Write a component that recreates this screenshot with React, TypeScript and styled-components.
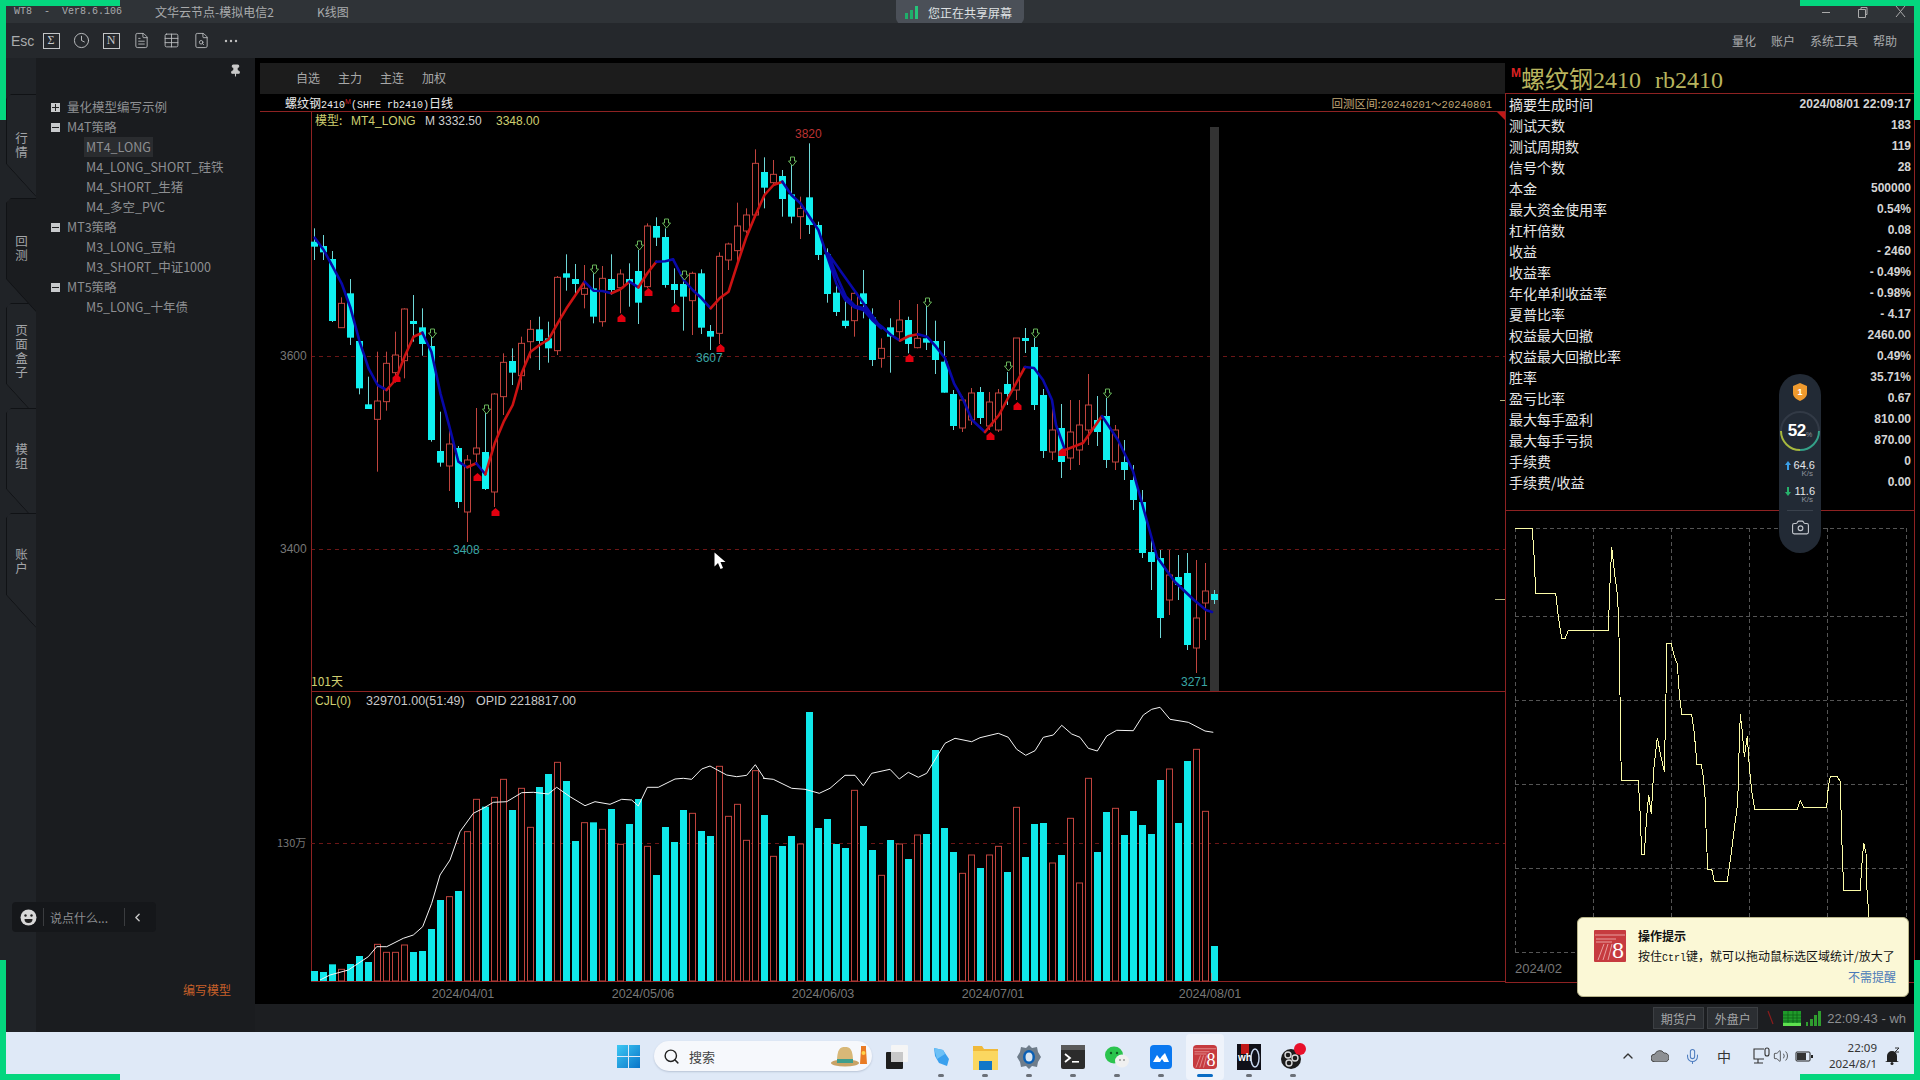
import React from "react";
import styled, { createGlobalStyle } from "styled-components";
import {
  Clock, FileText, Table, FileSearch, Search, ChevronUp, ChevronLeft, Mic, Volume2, Camera, Pin,
} from "lucide-react";

const CJK = `"Noto Sans CJK SC", "Liberation Sans", sans-serif`;
const SANS = `"Liberation Sans", "Noto Sans CJK SC", sans-serif`;
const MONO = `"Liberation Mono", "Noto Sans CJK SC", monospace`;

const Global = createGlobalStyle`
  html, body { margin: 0; padding: 0; width: 1920px; height: 1080px; overflow: hidden; background: #000; }
  body { font-family: ${CJK}; }
  * { box-sizing: border-box; }
`;

/* ---------- data ---------- */
type Candle = ["c" | "r", number, number, number, number];
const z2 = (t: "c" | "r", a: number, b: number, c: number, d: number): Candle => [t, 60 + a / 3, 60 + b / 3, 60 + c / 3, 60 + d / 3];
const z3 = (t: "c" | "r", a: number, b: number, c: number, d: number): Candle => [t, 100 + a / 3, 100 + b / 3, 100 + c / 3, 100 + d / 3];
const candles: Candle[] = [
  z2("c", 505, 545, 560, 600), z2("c", 525, 558, 577, 600), z2("c", 573, 597, 783, 786), z2("r", 712, 730, 803, 803),
  z2("c", 657, 700, 833, 855), z2("c", 840, 843, 985, 1003), z2("c", 950, 1033, 1047, 1047), z2("r", 875, 1023, 1078, 1235),
  z2("r", 875, 910, 1025, 1052), z2("r", 815, 885, 938, 968), z2("r", 745, 747, 902, 955), z2("c", 705, 783, 792, 845),
  z2("c", 745, 802, 852, 887), z2("c", 830, 858, 1140, 1145), z2("c", 1055, 1173, 1208, 1220),
  ["r", 427, 444, 466, 491], ["c", 446, 448, 502, 508], ["r", 455, 460, 512, 542], ["r", 408, 448, 454, 465],
  ["c", 413, 452, 489, 490], ["r", 393, 394, 492, 507],
  z2("r", 880, 907, 1010, 1065), z2("c", 865, 903, 938, 975), z2("r", 830, 850, 947, 990), z2("r", 780, 808, 845, 895),
  z2("c", 770, 808, 843, 930), z2("c", 785, 835, 865, 908), z2("r", 648, 652, 872, 885), z2("c", 583, 640, 653, 692),
  z2("c", 612, 657, 672, 705), z2("r", 615, 685, 703, 745), z2("c", 640, 685, 770, 790), z2("r", 618, 655, 785, 800),
  z2("c", 583, 657, 690, 705), z2("r", 628, 642, 683, 760), z2("c", 610, 657, 670, 740), z2("c", 570, 633, 728, 792),
  z2("r", 490, 498, 680, 685), z2("c", 472, 498, 533, 558), z2("c", 505, 531, 675, 683), z2("c", 625, 672, 690, 730),
  z2("c", 660, 672, 710, 812), z2("r", 635, 640, 722, 825), z2("c", 628, 640, 803, 822), z2("c", 795, 813, 830, 870),
  z2("r", 577, 589, 820, 852), z2("r", 548, 552, 600, 630), z2("r", 428, 498, 572, 610), z2("r", 445, 465, 513, 520),
  z2("r", 268, 310, 465, 470), z2("c", 292, 336, 383, 445), z2("r", 300, 343, 368, 375), z2("c", 330, 348, 417, 470),
  z2("c", 315, 403, 470, 490), z2("r", 410, 445, 470, 537),
  z3("c", 130, 292, 375, 402), z3("c", 365, 375, 465, 480), z3("c", 445, 463, 582, 608), z3("c", 550, 578, 636, 648),
  z3("c", 595, 662, 678, 685), z3("r", 572, 580, 662, 710), z3("c", 510, 580, 612, 655), z3("c", 625, 652, 780, 798),
  z3("r", 715, 745, 775, 803), z3("c", 655, 682, 710, 818), z3("r", 600, 660, 695, 720), z3("c", 650, 660, 732, 760),
  z3("r", 612, 715, 743, 745), z3("c", 618, 715, 728, 750), z3("c", 662, 723, 780, 822), z3("c", 723, 785, 878, 878),
  ["c", 390, 394, 426, 430], ["r", 396, 400, 428, 432], ["r", 388, 393, 420, 425], ["c", 387, 392, 418, 424],
  ["r", 392, 402, 426, 430], ["r", 389, 393, 430, 432], ["c", 372, 384, 394, 405], ["r", 338, 338, 390, 400],
  ["c", 328, 338, 341, 353], ["c", 338, 347, 405, 410], ["c", 389, 395, 451, 458], ["r", 400, 430, 452, 460],
  ["c", 404, 428, 462, 478], ["r", 400, 432, 458, 470], ["r", 400, 425, 450, 465], ["r", 374, 405, 430, 445],
  ["c", 396, 420, 432, 446], ["c", 398, 416, 460, 468], ["r", 425, 430, 462, 470], ["c", 440, 462, 470, 480],
  ["c", 465, 480, 500, 510], ["c", 490, 502, 553, 558], ["c", 540, 552, 562, 590], ["c", 550, 558, 618, 638],
  ["r", 550, 575, 600, 615], ["c", 555, 577, 585, 600], ["c", 553, 573, 645, 650], ["r", 560, 618, 648, 673],
  ["r", 563, 591, 603, 640], ["c", 590, 594, 600, 604],
];
const greenMarks: [number, number][] = [
  [13, 333], [19, 409], [31, 269], [36, 245], [39, 223], [41, 275], [53, 161], [68, 302], [77, 366], [80, 333], [88, 393],
];
const redMarks: [number, number][] = [
  [9, 378], [18, 477], [20, 512], [34, 318], [37, 292], [40, 308], [45, 348], [66, 358], [75, 436], [78, 406], [83, 452],
];

type P = [number, number];
const p2 = (a: number[][]): P[] => a.map(([x, y]) => [260 + x / 2.45, 60 + y / 3] as P);
const p3 = (a: number[][]): P[] => a.map(([x, y]) => [800 + x / 3, 100 + y / 3] as P);
const maLines: { color: string; pts: P[] }[] = [
  { color: "#0808a8", pts: p2([[134, 533], [156, 570], [178, 620], [200, 670], [222, 745], [244, 845], [266, 925], [288, 975], [310, 990]]) },
  { color: "#cc1212", pts: p2([[310, 990], [332, 960], [354, 890], [376, 830], [398, 818]]) },
  { color: "#0808a8", pts: p2([[398, 818], [420, 875], [442, 1000], [464, 1100], [486, 1205], [508, 1222]]) },
  { color: "#cc1212", pts: p2([[508, 1222], [530, 1210]]) },
  { color: "#0808a8", pts: p2([[530, 1210], [552, 1243]]) },
  { color: "#cc1212", pts: p2([[552, 1243], [575, 1150], [597, 1085], [619, 1035], [641, 940], [663, 875], [685, 855], [707, 838], [729, 790], [751, 745], [773, 705], [795, 665]]) },
  { color: "#0808a8", pts: p2([[795, 665], [817, 692], [839, 693], [861, 700]]) },
  { color: "#cc1212", pts: p2([[861, 700], [883, 688], [905, 665]]) },
  { color: "#0808a8", pts: p2([[905, 665], [927, 682]]) },
  { color: "#cc1212", pts: p2([[927, 682], [949, 640], [971, 605]]) },
  { color: "#0808a8", pts: p2([[971, 605], [993, 604], [1012, 598]]) },
  { color: "#0808a8", pts: p2([[1012, 598], [1038, 660], [1060, 690], [1082, 715], [1104, 745]]) },
  { color: "#cc1212", pts: p2([[1104, 745], [1126, 715], [1148, 695], [1170, 610], [1192, 530], [1214, 465], [1236, 405], [1258, 375], [1280, 365]]) },
  { color: "#0808a8", pts: p2([[1280, 365], [1302, 405], [1324, 430], [1346, 470], [1368, 510], [1390, 590], [1412, 670], [1434, 720], [1456, 742], [1478, 750], [1500, 780], [1522, 805]]).concat(p3([[84, 460], [111, 530], [138, 590], [165, 618], [192, 625], [219, 660], [246, 680], [273, 705], [300, 722]])) },
  { color: "#cc1212", pts: p3([[300, 722], [327, 708], [354, 703]]) },
  { color: "#0808a8", pts: p3([[354, 703], [381, 710], [408, 740], [435, 775], [462, 850], [490, 900]]).concat([[972, 420], [985, 432]]) },
  { color: "#cc1212", pts: [[985, 432], [999, 415], [1008, 398], [1025, 367]] },
  { color: "#0808a8", pts: [[1025, 367], [1034, 368], [1043, 380], [1052, 400], [1056, 425], [1065, 450]] },
  { color: "#cc1212", pts: [[1065, 450], [1083, 443], [1102, 416]] },
  { color: "#0808a8", pts: [[1102, 416], [1118, 440], [1133, 471], [1145, 514], [1157, 557], [1175, 582], [1194, 600], [1206, 610], [1212, 612]] },
];

const vols: ["c" | "r", number][] = ([
  "c873", "c876", "c853", "r868", "c852", "c828", "c846", "r793", "r817", "r817", "r795", "c816", "c813", "c747", "c660", "r650", "c633", "r455", "r358", "c380",
  "r352", "r298", "c390", "r325", "r442", "c321", "c282", "r247", "c303", "c483", "r428", "c427", "r448", "c387", "r493", "c432", "c357", "r499", "c585", "c441",
  "c486", "c390", "r400", "c453", "c468", "r259", "r409", "r373", "r481", "r272", "c405", "r529", "c498", "c468", "r492", "c96", "c444", "c417", "c492", "c504",
  "r331", "c438", "c510", "r586", "c480", "r492", "c537", "r465", "c462", "c210", "c444", "c516", "r580", "r525", "c564", "r525", "r499", "c576", "r382", "c531",
  "c432", "c429", "r549", "c525", "r415", "r609", "r295", "c516", "c396", "r385", "c465", "c393", "c435", "c462", "c300", "r267", "c429", "c243", "r208", "r394", "c798",
]).map((s) => [s[0] as "c" | "r", 680 + Number(s.slice(1)) / 3]);

const volLine: P[] = ([
  [150, 900], [180, 885], [235, 870], [295, 830], [320, 800], [350, 800], [400, 775], [430, 765], [458, 740], [485, 670], [510, 585], [540, 540], [570, 455], [610, 400], [640, 385], [670, 367], [710, 365], [755, 338], [790, 337], [835, 342], [860, 322], [900, 350], [945, 377], [975, 365], [1020, 373], [1055, 358], [1085, 360], [1105, 378], [1132, 322], [1165, 322], [1215, 297], [1240, 295], [1265, 298], [1295, 267], [1320, 258], [1370, 285], [1400, 290], [1430, 286], [1456, 254], [1483, 295],
] as number[][]).map(([x, y]) => [270 + x / 3, 680 + y / 3] as P).concat(([
  [10, 295], [40, 298], [95, 325], [135, 328], [178, 340], [210, 325], [255, 286], [285, 286], [310, 317], [335, 280], [390, 268], [418, 297], [445, 277], [475, 292], [500, 280], [555, 190], [585, 175], [635, 185], [660, 173], [715, 160], [745, 172], [770, 208], [797, 226], [825, 212], [850, 172], [880, 165], [905, 136], [935, 162], [960, 172], [985, 205], [1012, 213], [1040, 168], [1070, 151], [1120, 152], [1150, 105], [1175, 88], [1200, 82], [1230, 118], [1285, 127], [1335, 153], [1360, 157],
] as number[][]).map(([x, y]) => [760 + x / 3, 680 + y / 3] as P));

const equity: P[] = ([
  [46, 55], [97, 55], [103, 150], [107, 250], [167, 250], [175, 320], [185, 385], [196, 385], [205, 361], [325, 361], [329, 240], [335, 112], [345, 200], [353, 260], [357, 380], [360, 555], [364, 810], [415, 810], [421, 920], [425, 1033], [433, 1033], [440, 920], [446, 855], [454, 912], [461, 780], [472, 683], [483, 740], [493, 785], [497, 600], [501, 400], [513, 400], [525, 445], [532, 462], [538, 550], [545, 613], [575, 613], [583, 670], [591, 763], [604, 763], [610, 800], [616, 870], [618, 955], [623, 1077], [635, 1077], [643, 1113], [682, 1113], [695, 1020], [705, 940], [713, 880], [717, 730], [721, 613], [727, 665], [733, 740], [742, 677], [748, 770], [756, 850], [764, 898], [892, 898], [901, 872], [911, 892], [980, 892], [985, 830], [991, 800], [1012, 800], [1021, 815], [1025, 980], [1031, 1140], [1081, 1140], [1085, 1070], [1091, 998], [1098, 1030], [1101, 1140], [1107, 1222],
] as number[][]).map(([x, y]) => [1500 + x / 3, 510 + y / 3] as P);

const stats: [string, string][] = [
  ["摘要生成时间", "2024/08/01 22:09:17"], ["测试天数", "183"], ["测试周期数", "119"], ["信号个数", "28"], ["本金", "500000"],
  ["最大资金使用率", "0.54%"], ["杠杆倍数", "0.08"], ["收益", "- 2460"], ["收益率", "- 0.49%"], ["年化单利收益率", "- 0.98%"],
  ["夏普比率", "- 4.17"], ["权益最大回撤", "2460.00"], ["权益最大回撤比率", "0.49%"], ["胜率", "35.71%"], ["盈亏比率", "0.67"],
  ["最大每手盈利", "810.00"], ["最大每手亏损", "870.00"], ["手续费", "0"], ["手续费/收益", "0.00"],
];

const tree: { label: string; level: 0 | 1; box?: "+" | "-"; active?: boolean }[] = [
  { label: "量化模型编写示例", level: 0, box: "+" },
  { label: "M4T策略", level: 0, box: "-" },
  { label: "MT4_LONG", level: 1, active: true },
  { label: "M4_LONG_SHORT_硅铁", level: 1 },
  { label: "M4_SHORT_生猪", level: 1 },
  { label: "M4_多空_PVC", level: 1 },
  { label: "MT3策略", level: 0, box: "-" },
  { label: "M3_LONG_豆粕", level: 1 },
  { label: "M3_SHORT_中证1000", level: 1 },
  { label: "MT5策略", level: 0, box: "-" },
  { label: "M5_LONG_十年债", level: 1 },
];

const railTabs = [
  { label: "行情", h: 103, mt: 36, pb: 0 },
  { label: "回测", h: 114, mt: 1, pb: 12, active: true },
  { label: "页面盒子", h: 114, mt: -9, pb: 16 },
  { label: "模组", h: 114, mt: -9, pb: 16 },
  { label: "账户", h: 115, mt: -9, pb: 18 },
];

/* ---------- shell ---------- */
const Screen = styled.div`
  position: relative; width: 1920px; height: 1080px; overflow: hidden;
  display: flex; flex-direction: column; background: #000;
`;
const FrameMark = styled.div<{ $x: string; $y: string; $w: number; $h: number }>`
  position: absolute; z-index: 20; background: #04d67e;
  width: ${(p) => p.$w}px; height: ${(p) => p.$h}px;
  ${(p) => p.$x}: 0; ${(p) => p.$y}: 0;
`;
const TitleBar = styled.header`
  height: 23px; flex: none; background: #2f3337; display: flex; align-items: center;
  padding: 0 14px; color: #a9abad; font-size: 12px;
`;
const TitleLeft = styled.div`width: 882px; display: flex; align-items: center;`;
const AppVersion = styled.span`font: 10px ${MONO}; width: 141px; white-space: pre; color: #a8aaad;`;
const NodeName = styled.span`width: 162px; color: #a9abad;`;
const SharePill = styled.div`
  width: 128px; height: 24px; margin-top: 1px; background: #4b5058; border-radius: 0 0 6px 6px;
  display: flex; align-items: center; gap: 8px; padding-left: 8px; color: #dfe1e3; font-size: 12px;
`;
const WindowButtons = styled.div`margin-left: auto; display: flex; align-items: center; gap: 26px; padding-right: 0; color: #aaa;`;
const ToolBar = styled.div`
  height: 35px; flex: none; background: #25282c; display: flex; align-items: center; padding-left: 11px; color: #aeb0b2;
`;
const EscLabel = styled.span`width: 25px; font: 14px ${SANS}; color: #aaacae;`;
const ToolSlot = styled.div`width: 30px; display: flex; align-items: center; justify-content: center; color: #c2c4c6;`;
const BoxGlyph = styled.span`
  width: 17px; height: 16px; border: 1px solid #c2c4c6; display: flex; align-items: center; justify-content: center;
  font: 12px "Liberation Serif", serif; color: #c8cacc;
`;
const MenuRow = styled.nav`margin-left: auto; padding-right: 23px; display: flex; gap: 15px; font-size: 12px; color: #a9abad;`;
const Body = styled.div`flex: 1; min-height: 0; display: flex;`;

/* ---------- left ---------- */
const Rail = styled.aside`width: 36px; flex: none; background: #202327; padding-left: 6px; display: flex; flex-direction: column;`;
const RailTab = styled.div<{ $h: number; $mt: number; $pb: number; $active?: boolean }>`
  position: relative; width: 30px; height: ${(p) => p.$h}px; margin-top: ${(p) => p.$mt}px; padding-bottom: ${(p) => p.$pb}px;
  background: ${(p) => (p.$active ? "#1a1c1f" : "#212428")}; z-index: ${(p) => (p.$active ? 2 : 1)};
  clip-path: polygon(0 5px, 5px 0, 100% 0, 100% 100%, 0 calc(100% - 33px));
  display: flex; align-items: center; justify-content: center;
  color: #a3a5a8; font-size: 12.5px; line-height: 14px; writing-mode: vertical-rl; letter-spacing: 1.5px;
`;
const RailOutline = styled.svg`position: absolute; inset: 0;`;
const SidePanel = styled.section`
  width: 219px; flex: none; background: #1a1c1f; display: flex; flex-direction: column; padding-top: 6px;
`;
const PinRow = styled.div`height: 33px; display: flex; justify-content: flex-end; padding-right: 13px; color: #c8c8c8;`;
const TreeList = styled.div`display: flex; flex-direction: column; padding-left: 15px;`;
const TreeRow = styled.div<{ $level: number }>`
  height: 20px; display: flex; align-items: center; padding-left: ${(p) => (p.$level ? 33 : 0)}px;
  font-size: 12.5px; color: #8d8f92; white-space: nowrap;
`;
const TreeBox = styled.span<{ $plus: boolean }>`
  position: relative; width: 9px; height: 9px; margin-right: 5px; background: #c8cacc; flex: none;
  &::before { content: ""; position: absolute; left: 1px; right: 1px; top: 4px; height: 1px; background: #222; }
  &::after { content: ""; display: ${(p) => (p.$plus ? "block" : "none")}; position: absolute; top: 1px; bottom: 1px; left: 4px; width: 1px; background: #222; }
`;
const TreeLabel = styled.span<{ $active?: boolean }>`
  height: 20px; line-height: 20px; padding: 0 2px; background: ${(p) => (p.$active ? "#2a2c2f" : "transparent")};
`;
const SideSpacer = styled.div`flex: 1;`;
const ChatBox = styled.div`
  width: 144px; height: 30px; margin-left: -24px; background: #15171a; border-radius: 4px;
  display: flex; align-items: center; padding-left: 8px; color: #8c8e91; font-size: 12px;
`;
const ChatDivider = styled.span`width: 1px; height: 18px; background: #3a3c3f; margin: 0 6px;`;
const ChatText = styled.span`width: 68px; white-space: nowrap;`;
const WriteLink = styled.div`
  height: 100px; padding: 49px 0 0 147px; font-size: 12px; color: #c8602a; white-space: nowrap;
`;

/* ---------- centre ---------- */
const MainColumn = styled.main`flex: 1; min-width: 0; display: flex; flex-direction: column;`;
const Workspace = styled.div`height: 946px; flex: none; display: flex; background: #000; padding: 5px 0 0 5px;`;
const ChartColumn = styled.div`width: 1245px; flex: none; display: flex; flex-direction: column;`;
const ChartTabs = styled.div`
  height: 31px; flex: none; background: #1c1c1c; display: flex; align-items: center; gap: 18px; padding: 0 0 2px 36px;
  font-size: 12px; color: #a8a8a8;
`;
const ChartHead = styled.div`
  height: 18px; flex: none; border-bottom: 1px solid #8e2222; display: flex; align-items: center; justify-content: space-between;
  padding: 0 13px 0 25px; font-size: 12px; color: #ececec;
`;
const ChartTitle = styled.span`white-space: nowrap;`;
const MonoSmall = styled.span`font: 10px ${MONO};`;
const TinyM = styled.sup`font: 7px ${SANS}; color: #c22; vertical-align: 4px; line-height: 0;`;
const RangeText = styled.span`color: #c0a878; font: 10.5px ${MONO}; white-space: nowrap;`;
const RangeCjk = styled.span`font: 11.5px ${CJK};`;
const PlotSvg = styled.svg`display: block; flex: none;`;
const AxisText = styled.text<{ $c: string; $s?: number; $cjk?: boolean }>`
  fill: ${(p) => p.$c}; font-size: ${(p) => p.$s ?? 12}px; font-family: ${(p) => (p.$cjk ? CJK : SANS)};
`;

/* ---------- right ---------- */
const RightColumn = styled.aside`width: 410px; flex: none; display: flex; flex-direction: column;`;
const QuoteTitle = styled.div`
  height: 31px; flex: none; border-bottom: 1px solid #8e2222; padding: 0 0 2px 6px; display: flex; align-items: center;
  font: 24px "Liberation Serif", ${CJK}; color: #b8b45e; white-space: pre; word-spacing: 8px;
`;
const QuoteM = styled.span`font: bold 12px ${SANS}; color: #d22; align-self: flex-start; margin-top: 3px;`;
const StatsPane = styled.div`
  height: 417px; flex: none; border: 1px solid #8e2222; border-top: 0; padding: 0 3px; display: flex; flex-direction: column;
`;
const StatRow = styled.div`height: 21px; flex: none; display: flex; align-items: center; justify-content: space-between; padding-bottom: 2px;`;
const StatLabel = styled.span`font-size: 14px; color: #e6e6e6;`;
const StatValue = styled.span`font: bold 12px ${SANS}; color: #d4d4d4; white-space: pre;`;
const EquityPane = styled.div`height: 472px; flex: none; border: 1px solid #8e2222; border-top: 0;`;

/* ---------- status & taskbar ---------- */
const StatusBar = styled.div`
  height: 28px; flex: none; background: #1c1e21; display: flex; align-items: center; justify-content: flex-end; padding-right: 14px; gap: 3px;
`;
const AccountBtn = styled.span`
  width: 51px; height: 22px; background: #2b2e32; border: 1px solid #3c3f43; color: #a4a6a8; font-size: 12px;
  display: flex; align-items: center; justify-content: center;
`;
const StatusClock = styled.span`font: 13px ${SANS}; color: #8e9092; margin-left: 2px; white-space: nowrap;`;
const StatusGlyphs = styled.svg`margin-left: 3px; flex: none;`;

const TaskBar = styled.footer`
  height: 48px; flex: none; background: #dfe9f7; display: flex; align-items: center; padding: 0 20px 0 617px;
`;
const StartSlot = styled.div`width: 37px; display: flex;`;
const SearchPill = styled.div`
  width: 218px; height: 30px; border-radius: 15px; background: #f6f8fc; box-shadow: 0 1px 2px #b8c4d6;
  display: flex; align-items: center; padding-left: 9px; gap: 9px; font-size: 13px; color: #444; margin-right: 3px;
`;
const SearchArt = styled.svg`margin-left: auto; margin-right: 5px;`;
const TaskSlot = styled.div<{ $active?: boolean; $dot?: boolean }>`
  position: relative; width: 44px; height: 46px; margin-top: 2px; border-radius: 4px;
  display: flex; align-items: center; justify-content: center;
  background: transparent;
  &::before {
    content: ""; display: ${(p) => (p.$active ? "block" : "none")}; position: absolute; left: 3px; right: 3px; top: 0; bottom: 0;
    border-radius: 4px; background: #eef3fb;
  }
  &::after {
    content: ""; display: ${(p) => (p.$dot ? "block" : "none")}; position: absolute; bottom: 3px; left: 50%; transform: translateX(-50%);
    width: ${(p) => (p.$active ? 16 : 6)}px; height: 3px; border-radius: 2px; background: ${(p) => (p.$active ? "#0a6cc4" : "#6b7078")};
  }
`;
const TaskArt = styled.svg`position: relative; z-index: 1;`;
const Tray = styled.div`margin-left: auto; display: flex; align-items: center; color: #333;`;
const TraySlot = styled.div<{ $w: number; $ml?: number }>`
  width: ${(p) => p.$w}px; margin-left: ${(p) => p.$ml ?? 0}px; display: flex; justify-content: center; align-items: center; font-size: 14px;
`;
const ClockStack = styled.div`
  width: 63px; display: flex; flex-direction: column; align-items: flex-end; font: 11.5px "Noto Sans", ${SANS}; line-height: 16px; color: #333;
`;

/* ---------- overlays ---------- */
const Toast = styled.div`
  position: absolute; z-index: 10; left: 1577px; top: 917px; width: 332px; height: 80px;
  background: #fbf8d6; border-radius: 6px; border: 1px solid #b8b48a; display: flex; padding: 12px 0 0 16px; color: #111;
`;
const ToastBody = styled.div`margin: -1px 0 0 12px; display: flex; flex-direction: column; font-size: 12px; flex: 1; padding-right: 12px;`;
const ToastTitle = styled.div`font-weight: 700; line-height: 14px;`;
const ToastText = styled.div`line-height: 16px; margin-top: 5px; white-space: nowrap;`;
const ToastLink = styled.div`align-self: flex-end; color: #4a7ab8; margin-top: 6px; line-height: 14px;`;

const Meter = styled.div`
  position: absolute; z-index: 9; left: 1779px; top: 374px; width: 42px; height: 179px; border-radius: 21px;
  background: #222a35; display: flex; flex-direction: column; align-items: center; color: #fff;
`;
const MeterBadge = styled.svg`margin-top: 9px;`;
const MeterRing = styled.div`
  position: relative; width: 42px; height: 42px; margin-top: 9px; display: flex; align-items: center; justify-content: center;
`;
const RingArt = styled.svg`position: absolute; inset: 0;`;
const RingValue = styled.span`position: relative; font: bold 17px ${SANS}; color: #fff; letter-spacing: -0.3px;`;
const RingPct = styled.span`position: relative; font: 7px ${SANS}; color: #8a9098; margin-top: 6px;`;
const Rate = styled.div`
  display: grid; grid-template-columns: 6px 1fr; width: 30px; margin-top: 7px; align-items: center; column-gap: 1px;
`;
const RateNum = styled.span`font: 11px ${SANS}; color: #e4e6ea; text-align: right;`;
const RateUnit = styled.span`grid-column: 2; font: 8px ${SANS}; color: #8c929a; text-align: right; margin-top: -2px; padding-right: 2px;`;
const MeterSep = styled.div`width: 26px; height: 1px; background: #3a424d; margin-top: 6px;`;
const MeterCam = styled.div`margin-top: 7px; color: #c4c8ce;`;
const Cursor = styled.svg`position: absolute; z-index: 8; left: 714px; top: 552px;`;

/* ---------- chart helpers ---------- */
const toPts = (p: P[]) => p.map(([x, y]) => `${x.toFixed(1)},${y.toFixed(1)}`).join(" ");
const LINE = "#8e2222";
const CYAN = "#0ff0f0";
const REDC = "#c0443e";

const CandleMark: React.FC<{ k: number; c: Candle }> = ({ k, c }) => {
  const [t, h, top, bot, l] = c;
  const x = 311 + 9 * k;
  if (t === "c") {
    return (
      <g>
        <rect x={x + 3} y={h} width={1} height={l - h} fill="#6fd8d8" />
        <rect x={x} y={top} width={7} height={Math.max(bot - top, 2)} fill={CYAN} />
      </g>
    );
  }
  return (
    <g>
      <rect x={x + 3} y={h} width={1} height={l - h} fill={REDC} />
      <rect x={x + 0.5} y={top} width={6} height={bot - top} fill="#000" stroke={REDC} />
    </g>
  );
};

const PriceChart = () => (
  <PlotSvg width={1245} height={579} viewBox="260 112 1245 579">
    <line x1={311} y1={356.5} x2={1505} y2={356.5} stroke="#6b1616" strokeDasharray="4 4" />
    <line x1={311} y1={549.5} x2={1505} y2={549.5} stroke="#6b1616" strokeDasharray="4 4" />
    <rect x={311} y={112} width={1} height={579} fill={LINE} />
    <rect x={1210} y={127} width={9} height={564} fill="#333" />
    <AxisText $c="#777" x={280} y={360}>3600</AxisText>
    <AxisText $c="#777" x={280} y={553}>3400</AxisText>
    <AxisText $c="#cfcf70" $cjk x={315} y={125}>模型:</AxisText>
    <AxisText $c="#cfcf70" x={351} y={125}>MT4_LONG</AxisText>
    <AxisText $c="#d0d0d0" x={425} y={125}>M 3332.50</AxisText>
    <AxisText $c="#cfcf70" x={496} y={125}>3348.00</AxisText>
    <AxisText $c="#b33" x={795} y={138}>3820</AxisText>
    <AxisText $c="#3aa6a6" x={696} y={362}>3607</AxisText>
    <AxisText $c="#3aa6a6" x={453} y={554}>3408</AxisText>
    <AxisText $c="#3aa6a6" x={1181} y={686}>3271</AxisText>
    <AxisText $c="#cfcf70" $cjk x={311} y={686}>101天</AxisText>
    {candles.map((c, k) => <CandleMark key={k} k={k} c={c} />)}
    {maLines.map((s, i) => (
      <polyline key={i} points={toPts(s.pts)} fill="none" stroke={s.color} strokeWidth={2.6} strokeLinejoin="round" strokeLinecap="round" />
    ))}
    {greenMarks.map(([k, y]) => {
      const x = 315 + 9 * k;
      return <path key={k} d={`M${x - 1.5} ${y - 4}h4v4h2l-4 5-4-5h2z`} fill="#000" stroke="#68b45a" />;
    })}
    {redMarks.map(([k, y]) => {
      const x = 315 + 9 * k;
      return <path key={k} d={`M${x + 0.5} ${y - 4}l4 3.5v4.5h-8v-4.5z`} fill="#e2000f" />;
    })}
    <path d="M1497 112h8v8z" fill="#c01818" />
    <rect x={1500} y={400} width={5} height={1} fill="#b8b880" />
    <rect x={1495} y={599} width={10} height={1} fill="#b8b880" />
  </PlotSvg>
);

const VolumeChart = () => (
  <PlotSvg width={1245} height={313} viewBox="260 691 1245 313">
    <rect x={311} y={691} width={1194} height={1} fill={LINE} />
    <rect x={311} y={691} width={1} height={291} fill={LINE} />
    <rect x={311} y={981} width={1194} height={1} fill={LINE} />
    <line x1={311} y1={843.5} x2={1505} y2={843.5} stroke="#6b1616" strokeDasharray="4 4" />
    <AxisText $c="#777" $cjk x={277} y={847} $s={11}>130万</AxisText>
    <AxisText $c="#cfcf70" x={315} y={705}>CJL(0)</AxisText>
    <AxisText $c="#c8c8c8" x={366} y={705} $s={12.5}>329701.00(51:49)</AxisText>
    <AxisText $c="#c8c8c8" x={476} y={705} $s={12.5}>OPID 2218817.00</AxisText>
    {vols.map(([t, top], k) => {
      const x = 311 + 9 * k;
      return t === "c"
        ? <rect key={k} x={x} y={top} width={7} height={981 - top} fill="#10e8ea" />
        : <rect key={k} x={x + 0.5} y={top} width={6} height={981 - top} fill="#000" stroke={REDC} />;
    })}
    <polyline points={toPts(volLine)} fill="none" stroke="#f4f4f4" strokeWidth={1} />
    <rect x={1211} y={973} width={1} height={8} fill="#999" />
    {([["2024/04/01", 463], ["2024/05/06", 643], ["2024/06/03", 823], ["2024/07/01", 993], ["2024/08/01", 1210]] as [string, number][]).map(([d, x]) => (
      <AxisText key={d} $c="#777" $s={12.5} x={x} y={998} textAnchor="middle">{d}</AxisText>
    ))}
  </PlotSvg>
);

const EquityChart = () => {
  const vs = [1515.5, 1593.5, 1671.5, 1749.5, 1827.5, 1906.5];
  const hs = [528.5, 616.5, 700.5, 784.5, 868.5, 952.5];
  return (
    <PlotSvg width={408} height={471} viewBox="1506 511 408 471">
      {hs.map((y) => <line key={y} x1={1515} x2={1906} y1={y} y2={y} stroke="#555" strokeDasharray="4 3" />)}
      {vs.map((x) => <line key={x} x1={x} x2={x} y1={528} y2={952} stroke="#555" strokeDasharray="4 3" />)}
      <polyline points={toPts(equity)} fill="none" stroke="#fcfca8" strokeWidth={1} shapeRendering="crispEdges" />
      <AxisText $c="#777" $s={13} x={1515} y={973}>2024/02</AxisText>
    </PlotSvg>
  );
};

const Wt8Logo: React.FC<{ size: number; r: number }> = ({ size, r }) => (
  <TaskArt width={size} height={size} viewBox="0 0 32 32">
    <rect width={32} height={32} rx={r} fill="#c63b3f" />
    <path d="M1 5h30M2 9h20M2 12h16" stroke="#e8a0a0" strokeWidth={1} />
    <path d="M10 14L4 30M14 14L9 30M18 14L14 30" stroke="#e8a0a0" strokeWidth={1} />
    <text x={24} y={28} fontSize={24} fill="#fff" textAnchor="middle" fontFamily="Liberation Serif, serif">8</text>
  </TaskArt>
);

const ChatStrip = () => (
  <ChatBox>
    <svg width={17} height={17} viewBox="0 0 17 17">
      <circle cx={8.5} cy={8.5} r={8} fill="#d8d8d8" />
      <circle cx={5.5} cy={6.5} r={1.2} fill="#222" /><circle cx={11.5} cy={6.5} r={1.2} fill="#222" />
      <path d="M4.5 10h8a4 4 0 01-8 0z" fill="#222" />
    </svg>
    <ChatDivider />
    <ChatText>说点什么...</ChatText>
    <ChatDivider />
    <ChevronLeft size={13} strokeWidth={2.6} color="#c8c8c8" />
  </ChatBox>
);

export default function App() {
  return (
    <Screen>
      <Global />
      <TitleBar>
        <TitleLeft>
          <AppVersion>{"WT8  -  Ver8.6.106"}</AppVersion>
          <NodeName>文华云节点-模拟电信2</NodeName>
          <span>K线图</span>
        </TitleLeft>
        <SharePill>
          <svg width={16} height={14} viewBox="0 0 16 14">
            <rect x={1} y={8} width={3} height={6} fill="#1fae6a" />
            <rect x={6} y={5} width={3} height={9} fill="#1fae6a" />
            <rect x={11} y={1} width={3} height={13} fill="#25c47a" />
          </svg>
          您正在共享屏幕
        </SharePill>
        <WindowButtons>
          <svg width={10} height={10}><rect x={1} y={5} width={8} height={1} fill="#aaa" /></svg>
          <svg width={12} height={12} fill="none" stroke="#aaa"><path d="M1.5 3.5h7v8h-7zM4 3.5V1.5h6v7H8.5" /></svg>
          <svg width={11} height={11} stroke="#aaa"><path d="M1 0l9 11M10 0l-9 11" /></svg>
        </WindowButtons>
      </TitleBar>
      <ToolBar>
        <EscLabel>Esc</EscLabel>
        <ToolSlot><BoxGlyph>Σ</BoxGlyph></ToolSlot>
        <ToolSlot><Clock size={17} strokeWidth={1.3} /></ToolSlot>
        <ToolSlot><BoxGlyph>N</BoxGlyph></ToolSlot>
        <ToolSlot><FileText size={17} strokeWidth={1.2} /></ToolSlot>
        <ToolSlot><Table size={17} strokeWidth={1.2} /></ToolSlot>
        <ToolSlot><FileSearch size={17} strokeWidth={1.2} /></ToolSlot>
        <ToolSlot>
          <svg width={14} height={4} fill="#c0c0c0"><circle cx={2} cy={2} r={1.2} /><circle cx={7} cy={2} r={1.2} /><circle cx={12} cy={2} r={1.2} /></svg>
        </ToolSlot>
        <MenuRow><span>量化</span><span>账户</span><span>系统工具</span><span>帮助</span></MenuRow>
      </ToolBar>
      <Body>
        <Rail>
          {railTabs.map((t) => (
            <RailTab key={t.label} $h={t.h} $mt={t.mt} $pb={t.pb} $active={t.active}>
              <RailOutline width={30} height={t.h} fill="none" stroke="#101215">
                <path d={`M0.5 ${t.h - 33}V5Q0.5 0.5 5 0.5H30M0.5 ${t.h - 33}L30 ${t.h - 0.5}`} />
              </RailOutline>
              {t.label}
            </RailTab>
          ))}
        </Rail>
        <SidePanel>
          <PinRow><Pin size={13} strokeWidth={2} fill="#c8c8c8" /></PinRow>
          <TreeList>
            {tree.map((n) => (
              <TreeRow key={n.label} $level={n.level}>
                {n.box && <TreeBox $plus={n.box === "+"} />}
                <TreeLabel $active={n.active}>{n.label}</TreeLabel>
              </TreeRow>
            ))}
          </TreeList>
          <SideSpacer />
          <ChatStrip />
          <WriteLink>编写模型</WriteLink>
        </SidePanel>
        <MainColumn>
          <Workspace>
            <ChartColumn>
              <ChartTabs><span>自选</span><span>主力</span><span>主连</span><span>加权</span></ChartTabs>
              <ChartHead>
                <ChartTitle>螺纹钢<MonoSmall>2410</MonoSmall><TinyM>M</TinyM><MonoSmall>(SHFE rb2410)</MonoSmall>日线</ChartTitle>
                <RangeText><RangeCjk>回测区间:</RangeCjk>20240201～20240801</RangeText>
              </ChartHead>
              <PriceChart />
              <VolumeChart />
            </ChartColumn>
            <RightColumn>
              <QuoteTitle><QuoteM>M</QuoteM>{"螺纹钢2410 rb2410"}</QuoteTitle>
              <StatsPane>
                {stats.map(([k, v]) => (
                  <StatRow key={k}><StatLabel>{k}</StatLabel><StatValue>{v}</StatValue></StatRow>
                ))}
              </StatsPane>
              <EquityPane><EquityChart /></EquityPane>
            </RightColumn>
          </Workspace>
          <StatusBar>
            <AccountBtn>期货户</AccountBtn>
            <AccountBtn>外盘户</AccountBtn>
            <StatusGlyphs width={58} height={16} viewBox="0 0 58 16">
              <path d="M4 1l5 13" stroke="#8a1c1c" strokeWidth={1.2} />
              <rect x={19} y={1} width={18} height={15} fill="#1f9a2a" />
              <path d="M19 5h18M19 8h18M19 11h18M24 1v12M29 1v12M33 1v12" stroke="#0d5c14" strokeWidth={0.7} />
              <rect x={19} y={13} width={18} height={3} fill="#5fe04f" />
              <rect x={42} y={12} width={2} height={4} fill="#2f9e2f" />
              <rect x={46} y={9} width={3} height={7} fill="#2f9e2f" />
              <rect x={50} y={5} width={3} height={11} fill="#2f9e2f" />
              <rect x={54} y={1} width={3} height={15} fill="#2f9e2f" />
            </StatusGlyphs>
            <StatusClock>22:09:43 - wh</StatusClock>
          </StatusBar>
        </MainColumn>
      </Body>
      <TaskBar>
        <StartSlot>
          <svg width={23} height={23} viewBox="0 0 23 23">
            <defs><linearGradient id="w" x1="0" y1="0" x2="1" y2="1"><stop offset="0" stopColor="#3cc8f4" /><stop offset="1" stopColor="#0a74c8" /></linearGradient></defs>
            <path d="M0 0h11v11H0zM12 0h11v11H12zM0 12h11v11H0zM12 12h11v11H12z" fill="url(#w)" />
          </svg>
        </StartSlot>
        <SearchPill>
          <Search size={17} strokeWidth={2} color="#222" />
          <span>搜索</span>
          <SearchArt width={36} height={24} viewBox="0 0 36 24">
            <ellipse cx={14} cy={19} rx={14} ry={3.5} fill="#c9a366" />
            <path d="M6 18C6 5 9 3 14 3s8 2 8 15z" fill="#d8b878" />
            <path d="M6 15h16v4H6z" fill="#3f9e8c" />
            <path d="M30 2h5v3l1 15h-7l1-15z" fill="#e97b24" />
            <circle cx={32.5} cy={9} r={2} fill="#ffd24a" />
          </SearchArt>
        </SearchPill>
        <TaskSlot>
          <TaskArt width={24} height={26} viewBox="0 0 24 26">
            <rect x={1} y={8} width={17} height={17} rx={1} fill="#1e1e1e" />
            <rect x={6} y={1} width={17} height={17} rx={1} fill="#f5f5f5" />
            <rect x={6} y={8} width={12} height={10} fill="#c8c8c8" />
          </TaskArt>
        </TaskSlot>
        <TaskSlot $dot>
          <TaskArt width={20} height={24} viewBox="0 0 20 24">
            <path d="M3 3l9 2 6 9-2 7-8-3-4-7z" fill="#3aa0ee" />
            <path d="M3 3l9 2 2 4-8 5z" fill="#6cc0f6" />
          </TaskArt>
        </TaskSlot>
        <TaskSlot $dot>
          <TaskArt width={25} height={26} viewBox="0 0 25 26">
            <path d="M0 2h9l2 3h14v21H0z" fill="#f0b93a" />
            <rect x={0} y={7} width={25} height={19} fill="#fbd760" />
            <rect x={6} y={17} width={13} height={9} fill="#1277c8" />
          </TaskArt>
        </TaskSlot>
        <TaskSlot $dot>
          <TaskArt width={24} height={26} viewBox="0 0 24 26">
            <path d="M12 1l3 3 5-1 1 5 3 5-3 5-1 5-5-1-3 3-3-3-5 1-1-5-3-5 3-5 1-5 5 1z" fill="#6e7c8a" />
            <ellipse cx={12} cy={13} rx={6} ry={7} fill="#0a5fb4" />
            <ellipse cx={12} cy={13} rx={3.5} ry={4.5} fill="#d8e4f0" />
          </TaskArt>
        </TaskSlot>
        <TaskSlot $dot>
          <TaskArt width={24} height={24} viewBox="0 0 24 24">
            <rect width={24} height={24} rx={2} fill="#2c2c2c" />
            <rect width={24} height={5} fill="#5a5a5a" />
            <path d="M4 9l5 4-5 4" stroke="#fff" strokeWidth={1.8} fill="none" />
            <rect x={11} y={16} width={7} height={1.6} fill="#fff" />
          </TaskArt>
        </TaskSlot>
        <TaskSlot $dot>
          <TaskArt width={24} height={22} viewBox="0 0 24 22">
            <ellipse cx={9} cy={9} rx={9} ry={8.5} fill="#2bc44e" />
            <circle cx={6} cy={7} r={1.2} fill="#0e5c22" />
            <circle cx={12} cy={7} r={1.2} fill="#0e5c22" />
            <ellipse cx={17} cy={15} rx={7} ry={6.5} fill="#f0f0f0" />
            <circle cx={15} cy={14} r={1} fill="#999" />
            <circle cx={19} cy={14} r={1} fill="#999" />
          </TaskArt>
        </TaskSlot>
        <TaskSlot $dot>
          <TaskArt width={22} height={24} viewBox="0 0 22 24">
            <rect width={22} height={24} rx={4} fill="#0a78f0" />
            <path d="M3 17l4-7 3 4 2-3 3-3 4 9h-5l-2-3-2 3z" fill="#fff" />
          </TaskArt>
        </TaskSlot>
        <TaskSlot $dot $active>
          <Wt8Logo size={24} r={5} />
        </TaskSlot>
        <TaskSlot $dot>
          <TaskArt width={24} height={26} viewBox="0 0 24 26">
            <rect width={24} height={26} fill="#101018" />
            <rect x={4} width={8} height={10} fill="#c01818" />
            <text x={1} y={17} fontSize={10} fontWeight={700} fill="#fff" fontFamily="Liberation Sans">wh</text>
            <ellipse cx={18} cy={14} rx={4} ry={9} fill="none" stroke="#c8d8f0" strokeWidth={1.4} />
          </TaskArt>
        </TaskSlot>
        <TaskSlot $dot>
          <TaskArt width={26} height={28} viewBox="0 0 26 28">
            <circle cx={11} cy={16} r={10} fill="#1c1c1c" />
            <circle cx={8} cy={12} r={3} fill="none" stroke="#d8d8d8" strokeWidth={1.4} />
            <circle cx={15} cy={15} r={3} fill="none" stroke="#d8d8d8" strokeWidth={1.4} />
            <circle cx={9} cy={20} r={3} fill="none" stroke="#d8d8d8" strokeWidth={1.4} />
            <circle cx={20} cy={6} r={6} fill="#e8102a" />
          </TaskArt>
        </TaskSlot>
        <Tray>
          <TraySlot $w={32}><ChevronUp size={16} strokeWidth={2} /></TraySlot>
          <TraySlot $w={32}>
            <svg width={18} height={12} viewBox="0 0 18 12"><path d="M4 12a4 4 0 010-8 5 5 0 019-1 4.5 4.5 0 011 9z" fill="#8d9094" stroke="#333" strokeWidth={0.8} /></svg>
          </TraySlot>
          <TraySlot $w={32}><Mic size={17} strokeWidth={1.5} color="#4f7ec0" /></TraySlot>
          <TraySlot $w={32}>中</TraySlot>
          <TraySlot $w={20} $ml={12}>
            <svg width={18} height={18} viewBox="0 0 18 18" fill="none" stroke="#333" strokeWidth={1.1}>
              <path d="M11 2H1v10h10M5 12v4M1 16h9" /><rect x={12} y={1} width={4} height={8} rx={2} />
            </svg>
          </TraySlot>
          <TraySlot $w={18}><Volume2 size={16} strokeWidth={1.2} /></TraySlot>
          <TraySlot $w={20} $ml={4}>
            <svg width={18} height={12} viewBox="0 0 18 12"><rect x={1} y={2} width={14} height={9} rx={1} fill="none" stroke="#222" /><rect x={2} y={3} width={9} height={7} fill="#333" /><rect x={16} y={5} width={2} height={3} fill="#222" /></svg>
          </TraySlot>
          <ClockStack><span>22:09</span><span>2024/8/1</span></ClockStack>
          <TraySlot $w={16} $ml={7}>
            <svg width={16} height={18} viewBox="0 0 16 18">
              <path d="M3 14V9a5 5 0 0110 0v5l2 1H1z" fill="#222" />
              <circle cx={8} cy={16.5} r={1.5} fill="#222" />
              <path d="M11 1h4l-4 4h4" fill="none" stroke="#222" strokeWidth={0.9} />
            </svg>
          </TraySlot>
        </Tray>
      </TaskBar>

      <Meter>
        <MeterBadge width={16} height={18} viewBox="0 0 16 18">
          <path d="M8 0l7 3v7c0 4-3 6-7 8-4-2-7-4-7-8V3z" fill="#ef9a2e" />
          <text x={8} y={12} fontSize={9} fontWeight={700} fill="#fff" textAnchor="middle" fontFamily="Liberation Sans">1</text>
        </MeterBadge>
        <MeterRing>
          <RingArt width={42} height={42} viewBox="0 0 42 42" fill="none" strokeWidth={2}>
            <path d="M2 21a19 19 0 0138 0" stroke="#323a46" />
            <path d="M2 21a19 19 0 0019 19" stroke="#a6b83e" />
            <path d="M21 40a19 19 0 0019-19" stroke="#34a088" />
          </RingArt>
          <RingValue>52</RingValue><RingPct>%</RingPct>
        </MeterRing>
        <Rate>
          <svg width={6} height={9} viewBox="0 0 6 9" fill="#3a9fe8"><path d="M3 0l3 4H4v5H2V4H0z" /></svg>
          <RateNum>64.6</RateNum>
          <RateUnit>K/s</RateUnit>
        </Rate>
        <Rate>
          <svg width={6} height={9} viewBox="0 0 6 9" fill="#27b26c"><path d="M3 9L0 5h2V0h2v5h2z" /></svg>
          <RateNum>11.6</RateNum>
          <RateUnit>K/s</RateUnit>
        </Rate>
        <MeterSep />
        <MeterCam><Camera size={19} strokeWidth={1.4} /></MeterCam>
      </Meter>

      <Toast>
        <Wt8Logo size={32} r={1} />
        <ToastBody>
          <ToastTitle>操作提示</ToastTitle>
          <ToastText>按住<MonoSmall>Ctrl</MonoSmall>键，就可以拖动鼠标选区域统计/放大了</ToastText>
          <ToastLink>不需提醒</ToastLink>
        </ToastBody>
      </Toast>

      <Cursor width={12} height={18} viewBox="0 0 12 18"><path d="M0.5 0.5v14l3.5-3.5 2.5 6 2.5-1-2.5-6h5z" fill="#fff" /></Cursor>

      <FrameMark $x="left" $y="top" $w={120} $h={6} />
      <FrameMark $x="left" $y="top" $w={6} $h={120} />
      <FrameMark $x="right" $y="top" $w={120} $h={6} />
      <FrameMark $x="right" $y="top" $w={6} $h={120} />
      <FrameMark $x="left" $y="bottom" $w={120} $h={6} />
      <FrameMark $x="left" $y="bottom" $w={6} $h={120} />
      <FrameMark $x="right" $y="bottom" $w={120} $h={6} />
      <FrameMark $x="right" $y="bottom" $w={6} $h={120} />
    </Screen>
  );
}
